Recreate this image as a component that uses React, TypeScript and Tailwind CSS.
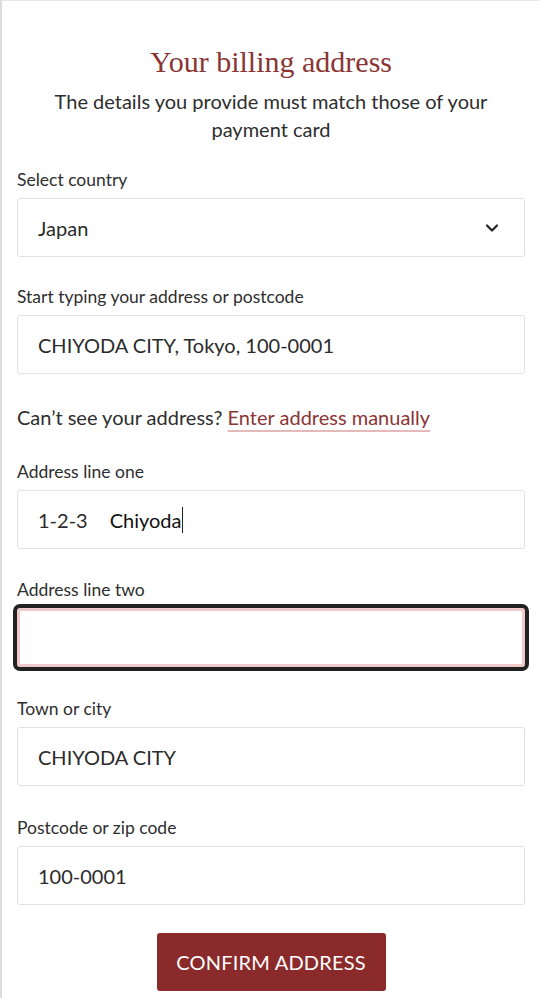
import { ChevronDown } from 'lucide-react'

const SANS = 'font-["Lato","Open_Sans",sans-serif]'

function Label({ children }: { children: React.ReactNode }) {
  return <div className="text-[17.5px] leading-[24px] text-[#2e2e2e] mb-[6px]">{children}</div>
}

function Field({ label, value, className = '' }: { label: string; value: string; className?: string }) {
  return (
    <div className={className}>
      <Label>{label}</Label>
      <div className="h-[59px] border border-[#e2e2e2] rounded-[3px] bg-white flex items-center px-[20px] text-[20px] text-[#2b2b2b]">
        {value}
      </div>
    </div>
  )
}

export default function App() {
  return (
    <div className={`min-h-[998px] bg-white border-l-2 border-l-[#dcdcdc] border-t border-t-[#e8e8e8] ${SANS}`}>
      <div className="flex flex-col pl-[15px] pr-[15px]">
        {/* Header */}
        <h1 className='mt-[43px] text-center font-["Liberation_Serif",serif] text-[30px] leading-[36px] text-[#8b3535]'>
          Your billing address
        </h1>
        <p className="mt-[7px] text-center text-[20px] leading-[28px] text-[#2e2e2e] px-[20px]">
          The details you provide must match those of your payment card
        </p>

        <div className="mt-[25px] flex flex-col gap-[28px]">
          {/* Country */}
          <div>
            <Label>Select country</Label>
            <div className="h-[59px] border border-[#e2e2e2] rounded-[3px] flex items-center justify-between pl-[20px] pr-[22px] text-[20px] text-[#2b2b2b]">
              <span>Japan</span>
              <ChevronDown size={20} strokeWidth={2.6} className="text-[#222]" />
            </div>
          </div>

          <Field label="Start typing your address or postcode" value="CHIYODA CITY, Tokyo, 100-0001" />
        </div>

        <div className="mt-[30px] text-[20px] leading-[26px] text-[#2e2e2e]">
          Can’t see your address?{' '}
          <span className="text-[#8b3535] underline decoration-[#e3b9b9] underline-offset-[5px]">Enter address manually</span>
        </div>

        <div className="mt-[30px] flex flex-col gap-[29px]">
          <div>
            <Label>Address line one</Label>
            <div className="h-[59px] border border-[#e2e2e2] rounded-[3px] flex items-center px-[20px] text-[20px] text-[#2b2b2b]">
              <span>1-2-3</span>
              <span className="ml-[22px] text-[#111]">Chiyoda</span>
              <span className="w-[1px] h-[26px] bg-[#222]" />
            </div>
          </div>

          <div>
            <Label>Address line two</Label>
            <div className="h-[59px] border-[3px] border-[#f0caca] rounded-[3px] bg-white outline-4 outline-[#222] outline-offset-0" />
          </div>

          <Field className="mt-[1px]" label="Town or city" value="CHIYODA CITY" />
          <Field className="mt-[1px]" label="Postcode or zip code" value="100-0001" />
        </div>

        <div className="mt-[28px] flex justify-center">
          <button
            type="button"
            className="h-[58px] w-[229px] rounded-[3px] bg-[#8a2a2a] text-white text-[20px] tracking-[0.2px]"
          >
            CONFIRM ADDRESS
          </button>
        </div>
      </div>
    </div>
  )
}
